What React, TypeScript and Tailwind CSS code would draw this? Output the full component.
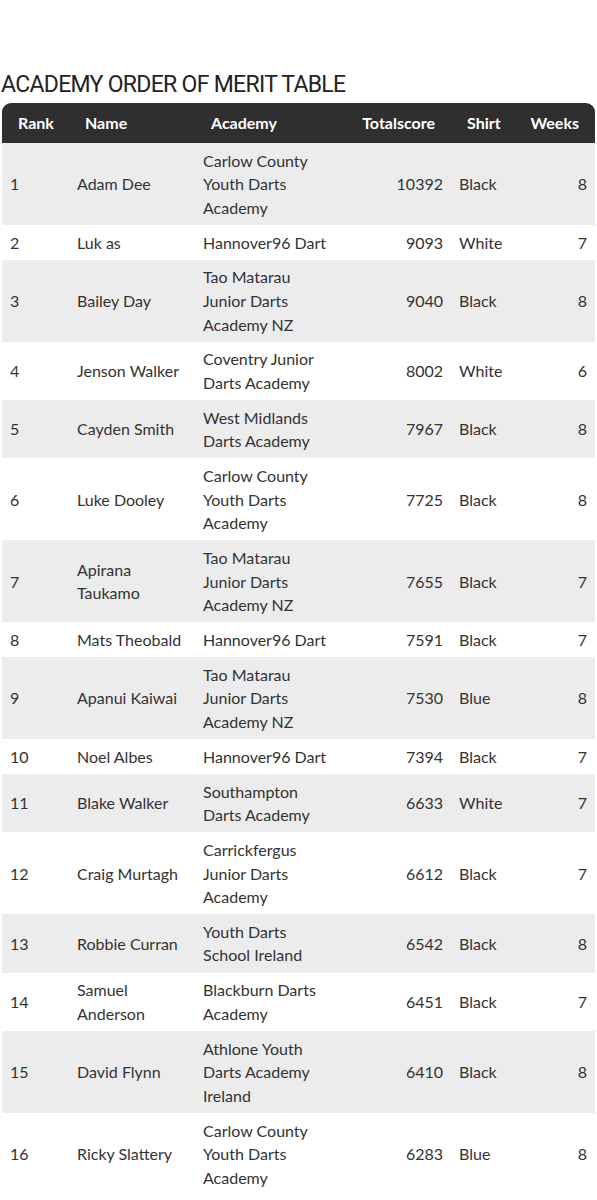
const rows = [
  { rank: 1, name: "Adam Dee", academy: "Carlow County\nYouth Darts\nAcademy", score: 10392, shirt: "Black", weeks: 8 },
  { rank: 2, name: "Luk as", academy: "Hannover96 Dart", score: 9093, shirt: "White", weeks: 7 },
  { rank: 3, name: "Bailey Day", academy: "Tao Matarau\nJunior Darts\nAcademy NZ", score: 9040, shirt: "Black", weeks: 8 },
  { rank: 4, name: "Jenson Walker", academy: "Coventry Junior\nDarts Academy", score: 8002, shirt: "White", weeks: 6 },
  { rank: 5, name: "Cayden Smith", academy: "West Midlands\nDarts Academy", score: 7967, shirt: "Black", weeks: 8 },
  { rank: 6, name: "Luke Dooley", academy: "Carlow County\nYouth Darts\nAcademy", score: 7725, shirt: "Black", weeks: 8 },
  { rank: 7, name: "Apirana\nTaukamo", academy: "Tao Matarau\nJunior Darts\nAcademy NZ", score: 7655, shirt: "Black", weeks: 7 },
  { rank: 8, name: "Mats Theobald", academy: "Hannover96 Dart", score: 7591, shirt: "Black", weeks: 7 },
  { rank: 9, name: "Apanui Kaiwai", academy: "Tao Matarau\nJunior Darts\nAcademy NZ", score: 7530, shirt: "Blue", weeks: 8 },
  { rank: 10, name: "Noel Albes", academy: "Hannover96 Dart", score: 7394, shirt: "Black", weeks: 7 },
  { rank: 11, name: "Blake Walker", academy: "Southampton\nDarts Academy", score: 6633, shirt: "White", weeks: 7 },
  { rank: 12, name: "Craig Murtagh", academy: "Carrickfergus\nJunior Darts\nAcademy", score: 6612, shirt: "Black", weeks: 7 },
  { rank: 13, name: "Robbie Curran", academy: "Youth Darts\nSchool Ireland", score: 6542, shirt: "Black", weeks: 8 },
  { rank: 14, name: "Samuel\nAnderson", academy: "Blackburn Darts\nAcademy", score: 6451, shirt: "Black", weeks: 7 },
  { rank: 15, name: "David Flynn", academy: "Athlone Youth\nDarts Academy\nIreland", score: 6410, shirt: "Black", weeks: 8 },
  { rank: 16, name: "Ricky Slattery", academy: "Carlow County\nYouth Darts\nAcademy", score: 6283, shirt: "Blue", weeks: 8 },
];

const App = () => {
  return (
    <div className="min-h-screen bg-white pt-[70px] font-['Lato','Liberation_Sans',sans-serif] text-[#333]">
      <h1 className="pl-[1px] font-['Roboto','Liberation_Sans',sans-serif] text-[23px] leading-[30px] font-normal tracking-[-0.7px] text-[#222] mb-[3px]">
        ACADEMY ORDER OF MERIT TABLE
      </h1>

      <div className="px-[2px]">
        <table className="w-[593px] table-fixed border-separate border-spacing-0 text-[16px]">
          <colgroup>
            <col className="w-[67px]" />
            <col className="w-[126px]" />
            <col className="w-[142px]" />
            <col className="w-[114px]" />
            <col className="w-[69px]" />
            <col className="w-[75px]" />
          </colgroup>
          <thead>
            <tr className="bg-[#2f2f2f] text-white leading-[24px]">
              <th className="rounded-tl-[9px] py-2 pl-4 text-left font-bold">Rank</th>
              <th className="py-2 pl-4 text-left font-bold">Name</th>
              <th className="py-2 pl-4 text-left font-bold">Academy</th>
              <th className="py-2 pr-4 text-right font-bold">Totalscore</th>
              <th className="py-2 pl-4 text-left font-bold">Shirt</th>
              <th className="rounded-tr-[9px] py-2 pr-4 text-right font-bold">Weeks</th>
            </tr>
          </thead>
          <tbody>
            {rows.map((r) => (
              <tr key={r.rank} className={r.rank % 2 === 1 ? "bg-[#ececec]" : "bg-white"}>
                <td className="px-2 py-[5.6px] leading-[23.6px] align-middle">{r.rank}</td>
                <td className="px-2 py-[5.6px] leading-[23.6px] align-middle whitespace-pre-line">{r.name}</td>
                <td className="px-2 py-[5.6px] leading-[23.6px] align-middle whitespace-pre-line">{r.academy}</td>
                <td className="px-2 py-[5.6px] leading-[23.6px] align-middle text-right">{r.score}</td>
                <td className="px-2 py-[5.6px] leading-[23.6px] align-middle">{r.shirt}</td>
                <td className="px-2 py-[5.6px] leading-[23.6px] align-middle text-right">{r.weeks}</td>
              </tr>
            ))}
          </tbody>
        </table>
      </div>
    </div>
  );
};

export default App;
